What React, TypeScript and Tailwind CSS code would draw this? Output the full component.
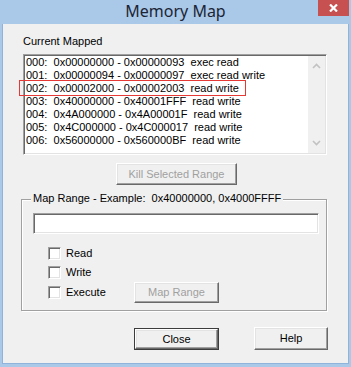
import React from "react";

const raised =
  "border border-t-white border-l-white border-b-[#696969] border-r-[#696969] shadow-[inset_-1px_-1px_0_#a0a0a0,inset_1px_1px_0_#e3e3e3] bg-[#f0f0f0]";
const sunken =
  "border border-t-[#a0a0a0] border-l-[#a0a0a0] border-b-white border-r-white shadow-[inset_1px_1px_0_#696969,inset_-1px_-1px_0_#e3e3e3]";

const rows = [
  "000:  0x00000000 - 0x00000093  exec read",
  "001:  0x00000094 - 0x00000097  exec read write",
  "002:  0x00002000 - 0x00002003  read write",
  "003:  0x40000000 - 0x40001FFF  read write",
  "004:  0x4A000000 - 0x4A00001F  read write",
  "005:  0x4C000000 - 0x4C000017  read write",
  "006:  0x56000000 - 0x560000BF  read write",
];

function Chevron({ up }: { up: boolean }) {
  return (
    <svg width="9" height="6" viewBox="0 0 9 6">
      <path
        d={up ? "M1 5 L4.5 1.5 L8 5" : "M1 1 L4.5 4.5 L8 1"}
        fill="none"
        stroke="#c2c2c2"
        strokeWidth="1.6"
      />
    </svg>
  );
}

function Check({ label, w }: { label: string; w?: string }) {
  return (
    <>
      <span className={`w-[13px] h-[13px] bg-white ${sunken}`} />
      <span className={`ml-[5px] leading-[13px] ${w ?? ""}`}>{label}</span>
    </>
  );
}

export default function App() {
  return (
    <div
      className="w-[351px] h-[367px] bg-[#aac8e8] flex flex-col px-[2px] pb-[3px] text-[11px] text-black"
      style={{ fontFamily: '"Liberation Sans", Arial, sans-serif' }}
    >
      {/* Title bar */}
      <div className="h-[24px] flex -mx-[2px]">
        <div className="flex-1" />
        <div
          className="text-[16px] leading-[22px] text-[#1b2535]"
          style={{ fontFamily: '"Noto Sans", "Open Sans", sans-serif' }}
        >
          Memory Map
        </div>
        <div className="flex-1 flex justify-end">
          <div className="w-[31px] h-[16px] mr-[2px] bg-[#c75050] flex items-center justify-center">
            <svg width="9" height="8" viewBox="0 0 9 8">
              <path d="M1 0.5 L8 7.5 M8 0.5 L1 7.5" stroke="white" strokeWidth="2.2" />
            </svg>
          </div>
        </div>
      </div>

      {/* Client */}
      <div className="flex-1 bg-[#f0f0f0] border-l border-r border-b border-[#8fb3da] flex flex-col items-start">
        <p className="ml-[20px] mt-[11px] leading-[13px]">Current Mapped</p>

        {/* List box */}
        <div className={`relative ml-[20px] mt-[6px] w-[304px] h-[101px] bg-white flex ${sunken}`}>
          <div className="flex-1 pl-[2px] pt-[1px] pb-[2px] flex flex-col">
            {rows.map((r) => (
              <div key={r} className="leading-[13px] whitespace-pre">
                {r}
              </div>
            ))}
          </div>
          <div className="w-[17px] mt-[1px] mb-[1px] mr-[1px] bg-[#f0f0f0] flex flex-col justify-between items-center py-[7px]">
            <Chevron up />
            <Chevron up={false} />
          </div>
          <div className="absolute left-[-5px] top-[25px] w-[227px] h-[16px] border border-[#e53935]" />
        </div>

        <button
          disabled
          className={`ml-[113px] mt-[8px] w-[121px] h-[22px] text-[#a0a0a0] leading-[13px] ${raised}`}
        >
          Kill Selected Range
        </button>

        {/* Group box */}
        <div className="relative ml-[18px] mt-[14px] w-[306px] h-[112px] border border-[#a0a0a0] shadow-[1px_1px_0_#fff,inset_1px_1px_0_#fff] flex flex-col items-start">
          <span className="absolute left-[9px] top-[-8px] px-[2px] bg-[#f0f0f0] leading-[13px] whitespace-pre">
            Map Range - Example:  0x40000000, 0x4000FFFF
          </span>
          <div className={`ml-[11px] mt-[13px] w-[286px] h-[21px] bg-white ${sunken}`} />
          <div className="mt-[9px] h-[20px] flex items-center pl-[26px]">
            <Check label="Read" />
          </div>
          <div className="h-[19px] flex items-center pl-[26px]">
            <Check label="Write" />
          </div>
          <div className="h-[21px] flex items-center pl-[26px]">
            <Check label="Execute" w="w-[63px]" />
            <button
              disabled
              className={`ml-[5px] w-[85px] h-[21px] text-[#a0a0a0] leading-[13px] ${raised}`}
            >
              Map Range
            </button>
          </div>
        </div>

        {/* Bottom buttons */}
        <div className="mt-[16px] flex items-start">
          <div className="ml-[131px] mt-[1px] w-[85px] h-[22px] border border-[#3c3c3c]">
            <button className={`w-full h-full leading-[13px] ${raised}`}>Close</button>
          </div>
          <button className={`ml-[35px] w-[74px] h-[23px] leading-[13px] ${raised}`}>Help</button>
        </div>
      </div>
    </div>
  );
}
